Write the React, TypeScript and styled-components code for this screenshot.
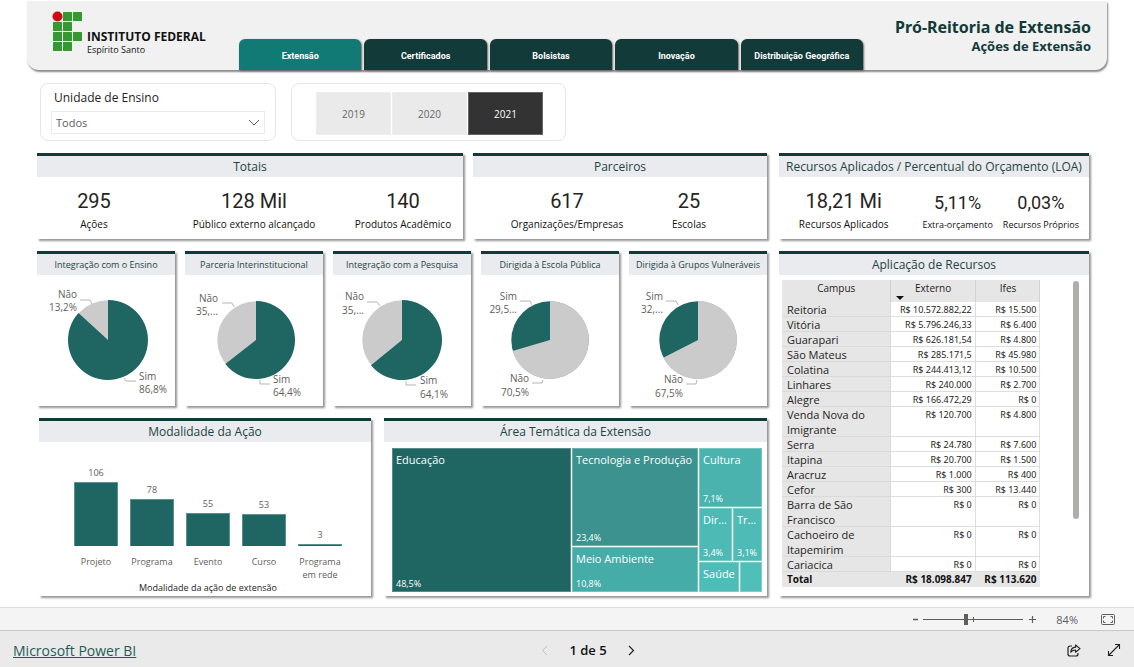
import React, { useState } from "react";
import styled, { createGlobalStyle } from "styled-components";

const GlobalStyle = createGlobalStyle`
  *, *::before, *::after { box-sizing: border-box; }
  html, body { margin: 0; padding: 0; background: #fff; }
  body { font-family: "Open Sans", "Noto Sans", sans-serif; color: #252423; }
  button, select, input { font-family: inherit; margin: 0; }
  h1, h2, p, dl, dd, dt { margin: 0; font-weight: 400; }
`;

const color = {
  dark: "#123a38",
  teal: "#1f6663",
  active: "#127a74",
  grey: "#cbcbcb",
  heading: "#e9ebee",
  title: "#1f4442",
  muted: "#605e5c",
};

const Page = styled.div`
  display: flex;
  flex-direction: column;
  min-height: 100vh;
`;

const Header = styled.header`
  display: grid;
  grid-template-columns: minmax(0, 212fr) minmax(0, 624fr) minmax(0, 244fr);
  height: 69px;
  margin: 1px 27px 0;
  background: #f1f1f1;
  border-radius: 0 0 12px 12px;
  box-shadow: 1px 2px 2px #8a8a8a;
`;

const Brand = styled.div`
  display: flex;
  gap: 4px;
  padding: 10px 0 0 25px;
  color: #111;
  white-space: nowrap;
`;

const BrandText = styled.div`
  padding-top: 18px;
`;

const BrandName = styled.p`
  font-size: 12px;
  line-height: 15px;
  && { font-weight: 700; }
`;

const BrandPlace = styled.p`
  font-size: 9px;
  line-height: 12px;
`;

const Tabs = styled.nav`
  display: flex;
  align-items: flex-end;
  gap: 3px;
`;

const Tab = styled.button<{ $active: boolean }>`
  flex: 1 1 0;
  min-width: 0;
  height: 31px;
  padding: 2px 0 0;
  border: 0;
  border-radius: 6px 6px 0 0;
  background: ${(p) => (p.$active ? color.active : color.dark)};
  box-shadow: 1px 1px 2px #6d6464;
  color: #fff;
  font-family: Roboto, sans-serif;
  font-size: 9px;
  font-weight: 700;
  white-space: nowrap;
`;

const Titles = styled.div`
  padding: 15px 16px 0 0;
  color: ${color.dark};
  text-align: right;
  white-space: nowrap;
`;

const Title = styled.h1`
  && { font-weight: 700; }
  font-family: "Noto Sans", sans-serif;
  font-size: 16px;
  line-height: 22px;
`;

const Subtitle = styled.p`
  && { font-weight: 700; }
  font-size: 13px;
  line-height: 16px;
`;

const Filters = styled.section`
  display: flex;
  gap: 15px;
  padding: 13px 40px 12px;
`;

const FilterCard = styled.div`
  height: 58px;
  border: 1px solid #e6e6e6;
  border-radius: 8px;
`;

const UnitCard = styled(FilterCard)`
  flex: 0 1 236px;
  padding: 6px 10px 0;
`;

const YearCard = styled(FilterCard)`
  flex: 0 1 275px;
  display: flex;
  gap: 1px;
  padding: 8px 22px 0 24px;
`;

const FilterLabel = styled.label`
  display: block;
  padding-left: 3px;
  font-size: 12px;
  line-height: 16px;
`;

const SelectWrap = styled.div`
  position: relative;
  margin-top: 5px;
`;

const Select = styled.select`
  appearance: none;
  display: block;
  width: 100%;
  height: 23px;
  padding: 0 24px 0 4px;
  border: 1px solid #eaeaea;
  border-radius: 0;
  background: #fff;
  color: ${color.muted};
  font-size: 11px;
`;

const SelectArrow = styled.svg`
  position: absolute;
  right: 5px;
  top: 8px;
  pointer-events: none;
`;

const YearButton = styled.button<{ $active: boolean }>`
  flex: 0 1 75px;
  height: 43px;
  padding: 0;
  border: 1px solid ${(p) => (p.$active ? "#666" : "#eee")};
  background: ${(p) => (p.$active ? "#333" : "#eaeaea")};
  color: ${(p) => (p.$active ? "#fff" : "#666")};
  font-size: 10px;
`;

const Dashboard = styled.main`
  display: grid;
  grid-template-columns: minmax(0, 730fr) minmax(0, 310fr);
  gap: 12px;
  padding: 0 45px 11px 37px;
`;

const Column = styled.div`
  display: flex;
  flex-direction: column;
  gap: 12px;
`;

const Row = styled.div<{ $columns: string; $gap: number; $indent?: number }>`
  display: grid;
  grid-template-columns: ${(p) => p.$columns};
  gap: ${(p) => p.$gap}px;
  padding-left: ${(p) => p.$indent ?? 0}px;
`;

const Card = styled.section`
  display: flex;
  flex-direction: column;
  min-width: 0;
  border-top: 3px solid ${color.dark};
  background: #fff;
  box-shadow: 2px 2px 2px #959595;
`;

const GrowCard = styled(Card)`
  flex: 1 0 auto;
`;

const CardTitle = styled.h2<{ $small?: boolean }>`
  height: 21px;
  background: ${color.heading};
  color: ${color.title};
  font-size: ${(p) => (p.$small ? 9 : 12)}px;
  line-height: 22px;
  text-align: center;
  white-space: nowrap;
`;

const Kpis = styled.dl<{ $columns: string; $pad: string }>`
  display: grid;
  grid-template-columns: ${(p) => p.$columns};
  height: 62px;
  padding: ${(p) => p.$pad};
`;

const Kpi = styled.div`
  display: flex;
  flex-direction: column-reverse;
  justify-content: flex-end;
  align-items: center;
  min-width: 0;
  padding-top: 12px;
  white-space: nowrap;
`;

const KpiValue = styled.dd<{ $small?: boolean }>`
  font-family: Roboto, sans-serif;
  font-size: ${(p) => (p.$small ? 18 : 20)}px;
  line-height: ${(p) => (p.$small ? 28 : 24)}px;
`;

const KpiLabel = styled.dt<{ $small?: boolean }>`
  color: #111;
  font-size: ${(p) => (p.$small ? 9 : 10)}px;
  line-height: ${(p) => (p.$small ? 16 : 22)}px;
`;

const PieSvg = styled.svg`
  display: block;
  width: 100%;
  height: 131px;
  font-size: 10px;
  fill: ${color.muted};
`;

const ChartBody = styled.div`
  height: 154px;
  padding: 0 29px 0 35px;
`;

const Bars = styled.div`
  display: grid;
  grid-template-columns: repeat(5, minmax(0, 1fr));
  gap: 12px;
`;

const BarItem = styled.div`
  display: flex;
  flex-direction: column;
  color: ${color.muted};
  font-size: 9px;
  line-height: 13px;
  text-align: center;
`;

const BarPlot = styled.div`
  display: flex;
  flex-direction: column;
  justify-content: flex-end;
  gap: 3px;
  height: 104px;
`;

const Bar = styled.div`
  border: 1px solid #5d918f;
  border-bottom: 0;
  background: ${color.teal};
`;

const BarLabel = styled.span`
  height: 35px;
  margin: 0 -4px;
  padding-top: 9px;
`;

const AxisTitle = styled.p`
  color: #252423;
  font-size: 9px;
  line-height: 13px;
  text-align: center;
`;

const Treemap = styled.div`
  display: grid;
  grid-template-columns: minmax(0, 179fr) minmax(0, 126fr) minmax(0, 63fr);
  gap: 1px;
  height: 144px;
  margin: 6px 5px 4px 8px;
`;

const TreeStack = styled.div<{ $rows: string }>`
  display: grid;
  grid-template-rows: ${(p) => p.$rows};
  gap: 1px;
`;

const TreeRow = styled.div<{ $columns: string }>`
  display: grid;
  grid-template-columns: ${(p) => p.$columns};
  gap: 1px;
`;

const Tile = styled.div<{ $fill: string }>`
  display: flex;
  flex-direction: column;
  justify-content: space-between;
  min-width: 0;
  min-height: 0;
  padding: 3px 0 1px 3px;
  border: 1px solid rgba(255, 255, 255, 0.25);
  background: ${(p) => p.$fill};
  color: #fff;
  white-space: nowrap;
`;

const TileName = styled.span`
  font-size: 11px;
  line-height: 16px;
`;

const TileShare = styled.span`
  font-size: 9px;
  line-height: 13px;
`;

const TableBody = styled.div`
  display: flex;
  justify-content: space-between;
  padding: 5px 10px 9px 3px;
`;

const Table = styled.table`
  width: 87%;
  table-layout: fixed;
  border-collapse: separate;
  border-spacing: 0;
  color: #252423;
  line-height: 15px;
`;

const HeadCell = styled.th<{ $width: string }>`
  position: relative;
  width: ${(p) => p.$width};
  height: 22px;
  padding: 0 0 5px;
  background: #e6e6e6;
  box-shadow: inset -1px 0 #d2d2d2;
  font-size: 10px;
  font-weight: 400;
`;

const SortMark = styled.svg`
  position: absolute;
  left: 5px;
  bottom: 2px;
`;

const NameCell = styled.th`
  padding: 0 16px 0 5px;
  background: #e6e6e6;
  box-shadow: inset -1px -1px #dadada;
  font-size: 11px;
  font-weight: 400;
  text-align: left;
  vertical-align: top;
`;

const MoneyCell = styled.td`
  padding: 0 4px 0 0;
  box-shadow: inset -1px -1px #dedede;
  font-family: "Noto Sans", sans-serif;
  font-size: 9px;
  text-align: right;
  vertical-align: top;
  white-space: nowrap;
`;

const TotalRow = styled.tr`
  th, td {
    background: #e6e6e6;
    box-shadow: none;
    color: #111;
    font-size: 10px;
    font-weight: 700;
  }
`;

const ScrollThumb = styled.div`
  width: 6px;
  height: 238px;
  margin-top: 1px;
  border-radius: 3px;
  background: #b0aeac;
`;

const ZoomBar = styled.div`
  display: flex;
  align-items: center;
  justify-content: flex-end;
  height: 23px;
  padding-right: 19px;
  border-top: 1px solid #dcdcdc;
  background: #f4f4f4;
  color: ${color.muted};
`;

const IconButton = styled.button`
  display: flex;
  align-items: center;
  justify-content: center;
  padding: 0;
  border: 0;
  background: none;
  color: inherit;
`;

const ZoomTrack = styled.div`
  position: relative;
  display: flex;
  margin: 0 5px;

  &::after {
    content: "";
    position: absolute;
    left: 50%;
    top: 3px;
    width: 1px;
    height: 5px;
    background: ${color.muted};
  }
`;

const ZoomSlider = styled.input`
  appearance: none;
  width: 100px;
  height: 11px;
  background: linear-gradient(${color.muted}, ${color.muted}) center / 100% 1px no-repeat;

  &::-webkit-slider-thumb {
    appearance: none;
    width: 4px;
    height: 11px;
    background: ${color.muted};
  }
`;

const ZoomValue = styled.output`
  margin: 0 23px 0 19px;
  font-size: 11px;
`;

const Footer = styled.footer`
  display: grid;
  grid-template-columns: 1fr auto 1fr;
  align-items: center;
  flex: 1 0 37px;
  padding: 2px 13px 0;
  border-top: 1px solid #c8c8c8;
  background: #eaeaea;
  color: #111;
`;

const BiLink = styled.a`
  color: #1f5c58;
  font-size: 14px;
`;

const Pager = styled.div`
  display: flex;
  align-items: center;
  gap: 21px;
  font-size: 13px;
  font-weight: 600;
`;

const FooterActions = styled.div`
  display: flex;
  justify-content: flex-end;
  gap: 26px;
`;

const FooterMiddle = styled.div`
  padding-left: 42px;
`;

type Point = [number, number];

interface PieData {
  title: string;
  cx: number;
  r: number;
  /* share of the first slice, drawn clockwise from the top */
  share: number;
  first: string;
  second: string;
  upper: { name: string; value: string; x: number; y: number; step: number };
  lower: { name: string; value: string; x: number; y: number; anchor: "start" | "end"; step: number };
  upperLine: Point[];
  lowerLine: Point[];
}

const pies: PieData[] = [
  {
    title: "Integração com o Ensino", cx: 71, r: 40, share: 0.868, first: color.teal, second: color.grey,
    upper: { name: "Não", value: "13,2%", x: 40, y: 23, step: 13 },
    lower: { name: "Sim", value: "86,8%", x: 102, y: 105, anchor: "start", step: 13 },
    upperLine: [[43, 25], [53, 25], [55, 29]],
    lowerLine: [[87, 103], [89, 106], [99, 106]],
  },
  {
    title: "Parceria Interinstitucional", cx: 71, r: 39, share: 0.644, first: color.teal, second: color.grey,
    upper: { name: "Não", value: "35,...", x: 33, y: 27, step: 13 },
    lower: { name: "Sim", value: "64,4%", x: 88, y: 108, anchor: "start", step: 13 },
    upperLine: [[37, 28], [47, 28], [49, 32]],
    lowerLine: [[75, 105], [75, 109], [85, 109]],
  },
  {
    title: "Integração com a Pesquisa", cx: 69, r: 40, share: 0.641, first: color.teal, second: color.grey,
    upper: { name: "Não", value: "35,...", x: 31, y: 25, step: 14 },
    lower: { name: "Sim", value: "64,1%", x: 87, y: 109, anchor: "start", step: 14 },
    upperLine: [[34, 27], [44, 27], [47, 31]],
    lowerLine: [[73, 106], [73, 110], [83, 110]],
  },
  {
    title: "Dirigida à Escola Pública", cx: 69, r: 39, share: 0.705, first: color.grey, second: color.teal,
    upper: { name: "Sim", value: "29,5...", x: 36, y: 25, step: 13 },
    lower: { name: "Não", value: "70,5%", x: 48, y: 107, anchor: "end", step: 14 },
    upperLine: [[39, 26], [49, 26], [51, 30]],
    lowerLine: [[51, 108], [61, 108], [62, 105]],
  },
  {
    title: "Dirigida à Grupos Vulneráveis", cx: 69, r: 39, share: 0.675, first: color.grey, second: color.teal,
    upper: { name: "Sim", value: "32,...", x: 34, y: 25, step: 13 },
    lower: { name: "Não", value: "67,5%", x: 54, y: 108, anchor: "end", step: 14 },
    upperLine: [[37, 26], [47, 26], [49, 30]],
    lowerLine: [[57, 109], [67, 109], [68, 105]],
  },
];

const bars = [
  { name: "Projeto", value: 106, height: 64 },
  { name: "Programa", value: 78, height: 47 },
  { name: "Evento", value: 55, height: 33 },
  { name: "Curso", value: 53, height: 32 },
  { name: "Programa em rede", value: 3, height: 2 },
];

const rows: [string, string, string][] = [
  ["Reitoria", "R$ 10.572.882,22", "R$ 15.500"],
  ["Vitória", "R$ 5.796.246,33", "R$ 6.400"],
  ["Guarapari", "R$ 626.181,54", "R$ 4.800"],
  ["São Mateus", "R$ 285.171,5", "R$ 45.980"],
  ["Colatina", "R$ 244.413,12", "R$ 10.500"],
  ["Linhares", "R$ 240.000", "R$ 2.700"],
  ["Alegre", "R$ 166.472,29", "R$ 0"],
  ["Venda Nova do Imigrante", "R$ 120.700", "R$ 4.800"],
  ["Serra", "R$ 24.780", "R$ 7.600"],
  ["Itapina", "R$ 20.700", "R$ 1.500"],
  ["Aracruz", "R$ 1.000", "R$ 400"],
  ["Cefor", "R$ 300", "R$ 13.440"],
  ["Barra de São Francisco", "R$ 0", "R$ 0"],
  ["Cachoeiro de Itapemirim", "R$ 0", "R$ 0"],
  ["Cariacica", "R$ 0", "R$ 0"],
];

const tabNames = ["Extensão", "Certificados", "Bolsistas", "Inovação", "Distribuição Geográfica"];

function Logo() {
  const squares: Point[] = [[10, 0], [20, 0], [0, 10], [10, 10], [0, 20], [10, 20], [20, 20], [0, 30], [10, 30]];
  return (
    <svg width="31" height="42" viewBox="0 0 31 42" aria-hidden="true">
      <circle cx="5.500" cy="5.500" r="5" fill="#cc0c10" />
      {squares.map(([x, y]) => (
        <rect key={`${x}-${y}`} x={x + 1} y={y + 1} width="9" height="9" rx="0.5" fill="#359830" />
      ))}
    </svg>
  );
}

function Pie({ data }: { data: PieData }) {
  const { cx, r, share, upper, lower } = data;
  const cy = 65;
  const angle = share * 2 * Math.PI;
  const x = cx + r * Math.sin(angle);
  const y = cy - r * Math.cos(angle);
  return (
    <Card>
      <CardTitle $small>{data.title}</CardTitle>
      <PieSvg viewBox="0 0 138 131" role="img" aria-label={data.title}>
        <circle cx={cx} cy={cy} r={r - 0.3} fill={data.second} />
        <path d={`M${cx} ${cy}V${cy - r}A${r} ${r} 0 1 1 ${x} ${y}Z`} fill={data.first} />
        <polyline points={data.upperLine.join(" ")} fill="none" stroke="#b5b5b5" />
        <polyline points={data.lowerLine.join(" ")} fill="none" stroke="#b5b5b5" />
        <text x={upper.x} y={upper.y} textAnchor="end">{upper.name}</text>
        <text x={upper.x} y={upper.y + upper.step} textAnchor="end">{upper.value}</text>
        <text x={lower.x} y={lower.y} textAnchor={lower.anchor}>{lower.name}</text>
        <text x={lower.x} y={lower.y + lower.step} textAnchor={lower.anchor}>{lower.value}</text>
      </PieSvg>
    </Card>
  );
}

interface KpiProps { value: string; label: string; small?: boolean }

function KpiItem({ value, label, small }: KpiProps) {
  return (
    <Kpi>
      <KpiLabel $small={small}>{label}</KpiLabel>
      <KpiValue $small={small}>{value}</KpiValue>
    </Kpi>
  );
}

export default function App() {
  const [tab, setTab] = useState(0);
  const [year, setYear] = useState("2021");
  const [zoom, setZoom] = useState(84);

  return (
    <Page>
      <GlobalStyle />
      <Header>
        <Brand>
          <Logo />
          <BrandText>
            <BrandName>INSTITUTO FEDERAL</BrandName>
            <BrandPlace>Espírito Santo</BrandPlace>
          </BrandText>
        </Brand>
        <Tabs>
          {tabNames.map((name, i) => (
            <Tab key={name} type="button" $active={i === tab} onClick={() => setTab(i)}>{name}</Tab>
          ))}
        </Tabs>
        <Titles>
          <Title>Pró-Reitoria de Extensão</Title>
          <Subtitle>Ações de Extensão</Subtitle>
        </Titles>
      </Header>

      <Filters>
        <UnitCard>
          <FilterLabel htmlFor="unit">Unidade de Ensino</FilterLabel>
          <SelectWrap>
            <Select id="unit" defaultValue="Todos"><option>Todos</option></Select>
            <SelectArrow width="12" height="7" viewBox="0 0 12 7" fill="none" stroke="#605e5c">
              <path d="M1 1l5 5 5-5" />
            </SelectArrow>
          </SelectWrap>
        </UnitCard>
        <YearCard role="group" aria-label="Ano">
          {["2019", "2020", "2021"].map((y) => (
            <YearButton key={y} type="button" $active={y === year} onClick={() => setYear(y)}>{y}</YearButton>
          ))}
        </YearCard>
      </Filters>

      <Dashboard>
        <Column>
          <Row $columns="minmax(0, 426fr) minmax(0, 294fr)" $gap={10}>
            <Card>
              <CardTitle>Totais</CardTitle>
              <Kpis $columns="114fr 206fr 92fr" $pad="0 14px 0 0">
                <KpiItem value="295" label="Ações" />
                <KpiItem value="128 Mil" label="Público externo alcançado" />
                <KpiItem value="140" label="Produtos Acadêmico" />
              </Kpis>
            </Card>
            <Card>
              <CardTitle>Parceiros</CardTitle>
              <Kpis $columns="146fr 98fr" $pad="0 29px 0 21px">
                <KpiItem value="617" label="Organizações/Empresas" />
                <KpiItem value="25" label="Escolas" />
              </Kpis>
            </Card>
          </Row>
          <Row $columns="repeat(5, minmax(0, 1fr))" $gap={10}>
            {pies.map((p) => <Pie key={p.title} data={p} />)}
          </Row>
          <Row $columns="minmax(0, 332fr) minmax(0, 383fr)" $gap={13} $indent={2}>
            <Card>
              <CardTitle>Modalidade da Ação</CardTitle>
              <ChartBody>
                <Bars>
                  {bars.map((b) => (
                    <BarItem key={b.name}>
                      <BarPlot>
                        <span>{b.value}</span>
                        <Bar style={{ height: b.height }} />
                      </BarPlot>
                      <BarLabel>{b.name}</BarLabel>
                    </BarItem>
                  ))}
                </Bars>
                <AxisTitle>Modalidade da ação de extensão</AxisTitle>
              </ChartBody>
            </Card>
            <Card>
              <CardTitle>Área Temática da Extensão</CardTitle>
              <Treemap>
                <Tile $fill="#1f6663">
                  <TileName>Educação</TileName>
                  <TileShare>48,5%</TileShare>
                </Tile>
                <TreeStack $rows="98fr 45fr">
                  <Tile $fill="#3b928e">
                    <TileName>Tecnologia e Produção</TileName>
                    <TileShare>23,4%</TileShare>
                  </Tile>
                  <Tile $fill="#46aca7">
                    <TileName>Meio Ambiente</TileName>
                    <TileShare>10,8%</TileShare>
                  </Tile>
                </TreeStack>
                <TreeStack $rows="59fr 53fr 30fr">
                  <Tile $fill="#4ab3ae">
                    <TileName>Cultura</TileName>
                    <TileShare>7,1%</TileShare>
                  </Tile>
                  <TreeRow $columns="33fr 29fr">
                    <Tile $fill="#4dbab5">
                      <TileName>Dir...</TileName>
                      <TileShare>3,4%</TileShare>
                    </Tile>
                    <Tile $fill="#4ebbb6">
                      <TileName>Tr...</TileName>
                      <TileShare>3,1%</TileShare>
                    </Tile>
                  </TreeRow>
                  <TreeRow $columns="40fr 22fr">
                    <Tile $fill="#4fbdb7"><TileName>Saúde</TileName></Tile>
                    <Tile $fill="#50bfb9" />
                  </TreeRow>
                </TreeStack>
              </Treemap>
            </Card>
          </Row>
        </Column>

        <Column>
          <Card>
            <CardTitle>Recursos Aplicados / Percentual do Orçamento (LOA)</CardTitle>
            <Kpis $columns="129fr 98fr 68fr" $pad="0 14px 0 0">
              <KpiItem value="18,21 Mi" label="Recursos Aplicados" />
              <KpiItem value="5,11%" label="Extra-orçamento" small />
              <KpiItem value="0,03%" label="Recursos Próprios" small />
            </Kpis>
          </Card>
          <GrowCard>
            <CardTitle>Aplicação de Recursos</CardTitle>
            <TableBody>
              <Table>
                <thead>
                  <tr>
                    <HeadCell $width="42%">Campus</HeadCell>
                    <HeadCell $width="33%">
                      Externo
                      <SortMark width="8" height="4" viewBox="0 0 8 4"><path d="M0 0h8L4 4z" fill="#111" /></SortMark>
                    </HeadCell>
                    <HeadCell $width="25%">Ifes</HeadCell>
                  </tr>
                </thead>
                <tbody>
                  {rows.map(([name, ext, ifes]) => (
                    <tr key={name}>
                      <NameCell scope="row">{name}</NameCell>
                      <MoneyCell>{ext}</MoneyCell>
                      <MoneyCell>{ifes}</MoneyCell>
                    </tr>
                  ))}
                </tbody>
                <tfoot>
                  <TotalRow>
                    <NameCell scope="row">Total</NameCell>
                    <MoneyCell>R$ 18.098.847</MoneyCell>
                    <MoneyCell>R$ 113.620</MoneyCell>
                  </TotalRow>
                </tfoot>
              </Table>
              <ScrollThumb aria-hidden="true" />
            </TableBody>
          </GrowCard>
        </Column>
      </Dashboard>

      <ZoomBar>
        <IconButton type="button" aria-label="Reduzir" onClick={() => setZoom(zoom - 1)}>
          <svg width="5" height="9" viewBox="0 0 5 9"><path d="M0 4.500h5" stroke="currentColor" strokeWidth="1.5" /></svg>
        </IconButton>
        <ZoomTrack>
          <ZoomSlider
            type="range"
            min="0"
            max="200"
            value={zoom}
            aria-label="Zoom"
            onChange={(e) => setZoom(Number(e.target.value))}
          />
        </ZoomTrack>
        <IconButton type="button" aria-label="Ampliar" onClick={() => setZoom(zoom + 1)}>
          <svg width="9" height="9" viewBox="0 0 9 9"><path d="M1 4.500h7M4.500 1v7" stroke="currentColor" strokeWidth="1.2" /></svg>
        </IconButton>
        <ZoomValue>{zoom}%</ZoomValue>
        <IconButton type="button" aria-label="Ajustar à página">
          <svg width="14" height="11" viewBox="0 0 14 11" fill="none" stroke="currentColor">
            <rect x="0.5" y="0.5" width="13" height="10" rx="1" />
            <path d="M4.500 2.500h-2v2M9.500 2.500h2v2M4.500 8.500h-2v-2M9.500 8.500h2v-2" />
          </svg>
        </IconButton>
      </ZoomBar>

      <Footer>
        <div><BiLink href="#powerbi">Microsoft Power BI</BiLink></div>
        <FooterMiddle>
          <Pager>
            <IconButton type="button" aria-label="Página anterior" disabled>
              <svg width="7" height="11" viewBox="0 0 7 11" fill="none" stroke="#bdbdbd"><path d="M6 1L1.500 5.500 6 10" /></svg>
            </IconButton>
            <span>1 de 5</span>
            <IconButton type="button" aria-label="Próxima página">
              <svg width="7" height="11" viewBox="0 0 7 11" fill="none" stroke="#222" strokeWidth="1.2"><path d="M1 1l4.500 4.500L1 10" /></svg>
            </IconButton>
          </Pager>
        </FooterMiddle>
        <FooterActions>
          <IconButton type="button" aria-label="Compartilhar">
            <svg width="14" height="13" viewBox="0 0 14 13" fill="none" stroke="#222" strokeWidth="1.2" strokeLinejoin="round">
              <path d="M5 2H3a2 2 0 0 0-2 2v6a2 2 0 0 0 2 2h6a2 2 0 0 0 2-2V9" />
              <path d="M8.500 1l4.500 3.600-4.500 3.600V6C6.500 6 5 6.600 3.800 8.200 4 5.200 5.800 3.400 8.500 3.200z" />
            </svg>
          </IconButton>
          <IconButton type="button" aria-label="Tela inteira">
            <svg width="14" height="14" viewBox="0 0 14 14" fill="none" stroke="#222" strokeWidth="1.1">
              <path d="M1.500 12.500l11-11M8 1.500h4.500V6M1.500 8v4.500H6" />
            </svg>
          </IconButton>
        </FooterActions>
      </Footer>
    </Page>
  );
}
